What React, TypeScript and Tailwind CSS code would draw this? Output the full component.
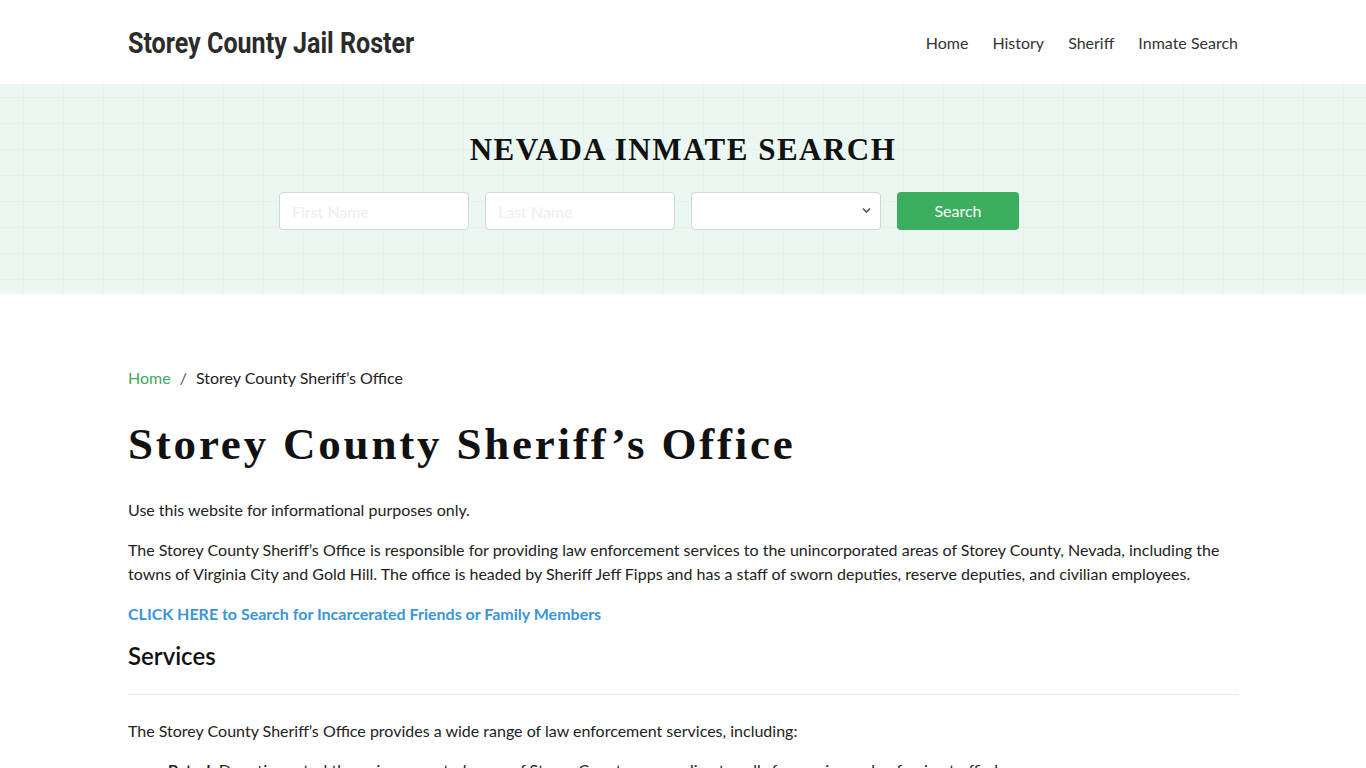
import React from 'react';

const navLinks = ['Home', 'History', 'Sheriff', 'Inmate Search'];

const Header = () => (
  <header className="bg-white h-[84px]">
    <div className="w-[1110px] mx-auto h-full flex items-center justify-between">
      <a
        href="#"
        className="inline-block mt-[3px] origin-left scale-x-[0.865] text-[29px] font-bold text-[#2b2b2b] whitespace-nowrap [font-family:Roboto,sans-serif]"
      >
        Storey County Jail Roster
      </a>
      <nav className="flex items-center gap-6 mt-[1px]">
        {navLinks.map((link) => (
          <a key={link} href="#" className="text-[16px] text-[#333] [font-family:Lato,sans-serif]">
            {link}
          </a>
        ))}
      </nav>
    </div>
  </header>
);

const SearchHero = () => (
  <section className="h-[210px] bg-[#ebf8f2] bg-[linear-gradient(to_right,rgba(0,0,0,0.025)_1px,transparent_1px),linear-gradient(to_bottom,rgba(0,0,0,0.025)_1px,transparent_1px)] bg-[size:40px_26px] bg-[position:23px_13px]">
    <div className="w-[1110px] mx-auto pt-[48px] flex flex-col items-center">
      <h2 className="text-[31px] font-bold text-[#111] tracking-[1.5px] leading-[36px] [font-family:'Liberation_Serif',serif]">
        NEVADA INMATE SEARCH
      </h2>
      <form className="mt-[24px] flex gap-[16px] [font-family:Lato,sans-serif]">
        <input
          placeholder="First Name"
          className="w-[190px] h-[38px] bg-white border border-[#d6d6d6] rounded-[4px] px-3 text-[16px] placeholder:text-[#eee] outline-none"
        />
        <input
          placeholder="Last Name"
          className="w-[190px] h-[38px] bg-white border border-[#d6d6d6] rounded-[4px] px-3 text-[16px] placeholder:text-[#eee] outline-none"
        />
        <div className="relative w-[190px] h-[38px] bg-white border border-[#d6d6d6] rounded-[4px]">
          <svg
            className="absolute right-[9px] top-[14px]"
            width="9"
            height="7"
            viewBox="0 0 9 7"
            fill="none"
            stroke="#555"
            strokeWidth="1.6"
          >
            <path d="M1 1.5 4.5 5 8 1.5" />
          </svg>
        </div>
        <div className="w-[190px]">
          <button
            type="button"
            className="w-[122px] h-[38px] rounded-[4px] bg-[#3cae5f] text-white text-[16px]"
          >
            Search
          </button>
        </div>
      </form>
    </div>
  </section>
);

const Content = () => (
  <main className="w-[1110px] mx-auto pt-[72px] text-[#222] text-[16px] leading-[24px] [font-family:Lato,sans-serif]">
    <div className="flex items-center">
      <a href="#" className="text-[#43a862]">Home</a>
      <span className="px-[9px] text-[#555]">/</span>
      <span>Storey County Sheriff’s Office</span>
    </div>
    <h1 className="mt-[28px] text-[45px] leading-[52px] font-bold tracking-[2.8px] text-[#111] [font-family:'Liberation_Serif',serif]">
      Storey County Sheriff’s Office
    </h1>
    <p className="mt-[28px]">Use this website for informational purposes only.</p>
    <p className="mt-[16px]">
      The Storey County Sheriff’s Office is responsible for providing law enforcement services to the unincorporated
      areas of Storey County, Nevada, including the towns of Virginia City and Gold Hill. The office is headed by
      Sheriff Jeff Fipps and has a staff of sworn deputies, reserve deputies, and civilian employees.
    </p>
    <p className="mt-[16px]">
      <a href="#" className="font-bold text-[#3b95d6]">
        CLICK HERE to Search for Incarcerated Friends or Family Members
      </a>
    </p>
    <h2 className="mt-[12px] text-[24px] leading-[36px] font-semibold text-[#111]">Services</h2>
    <hr className="mt-[20px] border-[#e8e8e8]" />
    <p className="mt-[24px]">
      The Storey County Sheriff’s Office provides a wide range of law enforcement services, including:
    </p>
    <ul className="mt-[15px] pl-[40px] list-disc">
      <li>
        <strong>Patrol:</strong> Deputies patrol the unincorporated areas of Storey County, responding to calls for
        service and enforcing traffic laws.
      </li>
    </ul>
  </main>
);

export default function App() {
  return (
    <div className="min-h-screen bg-white">
      <Header />
      <SearchHero />
      <Content />
    </div>
  );
}
